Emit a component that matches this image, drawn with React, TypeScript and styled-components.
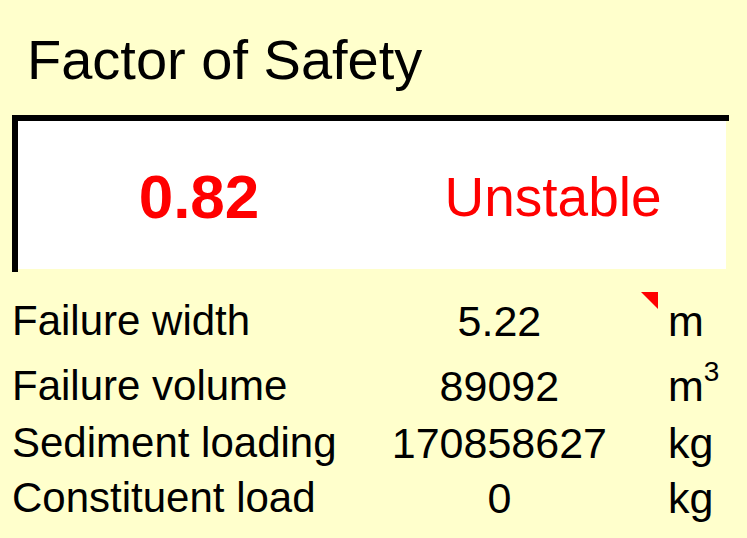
import React from "react";
import styled, { createGlobalStyle } from "styled-components";

const Global = createGlobalStyle`
  * { box-sizing: border-box; }
  body { margin: 0; background: #ffffcc; color: #000; font-family: "Liberation Sans", Arial, sans-serif; }
`;

const Panel = styled.main`
  min-height: 100vh;
  padding: 32px 18px 0 12px;
  background: #ffffcc;
`;

const Title = styled.h1`
  margin: 0 0 27px 15px;
  font-size: 56px;
  line-height: 56px;
  font-weight: 400;
`;

const Result = styled.section`
  display: grid;
  grid-template-columns: 362fr 346fr;
  align-items: center;
  justify-items: center;
  min-height: 157px;
  padding: 0 3px 3px 0;
  border-top: 6px solid #000;
  border-left: 6px solid #000;
  background: #fff content-box;
  color: #f00;
`;

const Reading = styled.span<{ $strong?: boolean }>`
  padding-top: 4px;
  font-size: ${(p) => (p.$strong ? 62 : 55)}px;
  font-weight: ${(p) => (p.$strong ? 700 : 400)};
  line-height: 64px;
`;

const Measures = styled.table`
  width: 100%;
  margin-top: 20px;
  border-collapse: collapse;
  table-layout: fixed;
  font-size: 43px;
  line-height: 50px;
`;

const Row = styled.tr<{ $height: number }>`
  height: ${(p) => p.$height}px;
  vertical-align: bottom;
`;

const Label = styled.th`
  width: 46%;
  padding: 0;
  font-size: 42px;
  font-weight: 400;
  text-align: left;
  white-space: nowrap;
`;

const Value = styled.td`
  position: relative;
  padding: 0 11px 0 0;
  text-align: center;
`;

const Unit = styled.td`
  width: 61px;
  padding: 0;
  white-space: nowrap;
`;

const Exponent = styled.sup`
  font-size: 28px;
  line-height: 0;
  vertical-align: 20px;
`;

const NoteMarker = styled.svg`
  position: absolute;
  top: 0;
  right: 10px;
`;

const rows = [
  { label: "Failure width", value: "5.22", unit: "m", height: 54, note: true },
  { label: "Failure volume", value: "89092", unit: "m", power: "3", height: 65 },
  { label: "Sediment loading", value: "170858627", unit: "kg", height: 57 },
  { label: "Constituent load", value: "0", unit: "kg", height: 55 },
];

export default function App() {
  return (
    <Panel>
      <Global />
      <Title>Factor of Safety</Title>
      <Result>
        <Reading as="strong" $strong>0.82</Reading>
        <Reading>Unstable</Reading>
      </Result>
      <Measures>
        <tbody>
          {rows.map((r) => (
            <Row key={r.label} $height={r.height}>
              <Label scope="row">{r.label}</Label>
              <Value>
                {r.value}
                {r.note && (
                  <NoteMarker width="17" height="17" aria-hidden="true">
                    <path d="M0 0H17V17Z" fill="#f00" />
                  </NoteMarker>
                )}
              </Value>
              <Unit>
                {r.unit}
                {r.power && <Exponent>{r.power}</Exponent>}
              </Unit>
            </Row>
          ))}
        </tbody>
      </Measures>
    </Panel>
  );
}
